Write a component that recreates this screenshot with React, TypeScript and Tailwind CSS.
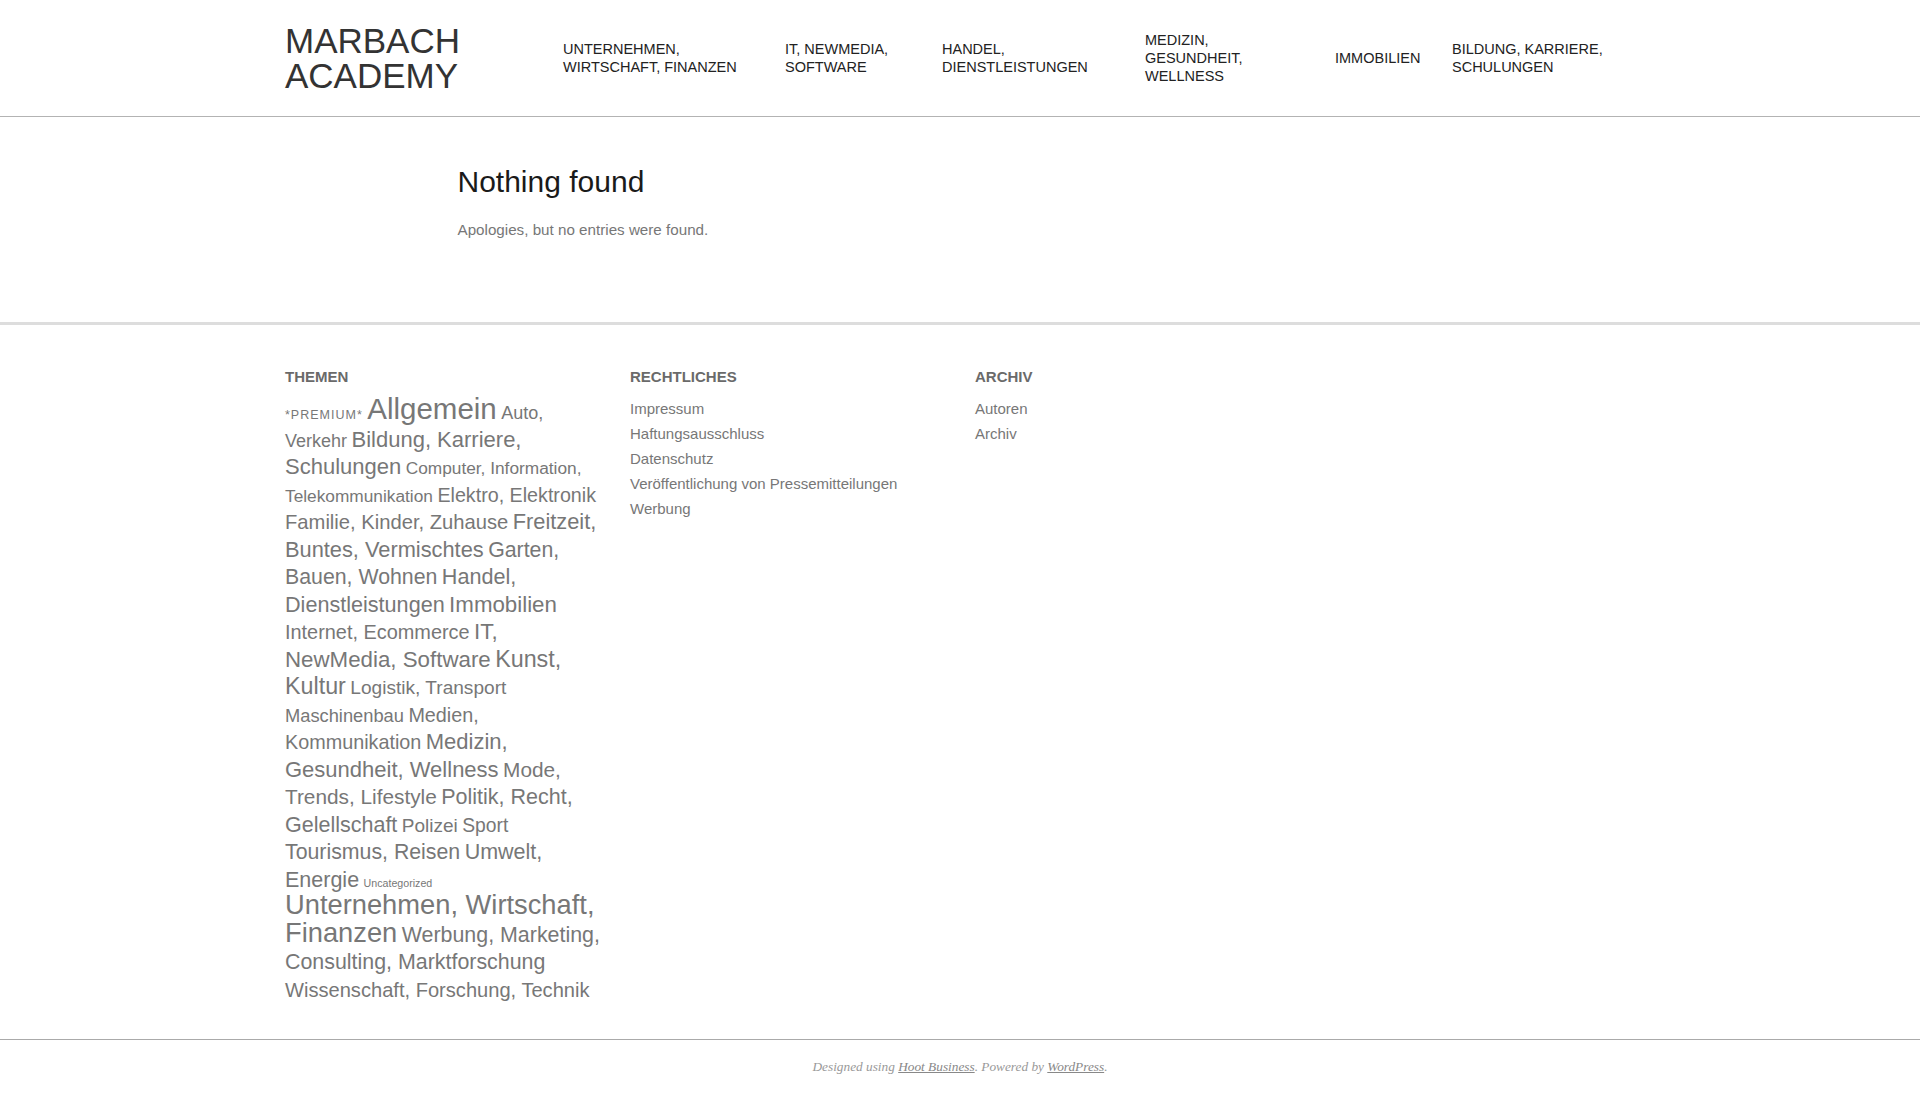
import React from "react";

type Tag = { t: string; c: string };

const navItems = [
  { lines: ["UNTERNEHMEN,", "WIRTSCHAFT, FINANZEN"], w: "w-[222px]" },
  { lines: ["IT, NEWMEDIA,", "SOFTWARE"], w: "w-[157px]" },
  { lines: ["HANDEL,", "DIENSTLEISTUNGEN"], w: "w-[203px]" },
  { lines: ["MEDIZIN,", "GESUNDHEIT,", "WELLNESS"], w: "w-[190px]" },
  { lines: ["IMMOBILIEN"], w: "w-[117px]" },
  { lines: ["BILDUNG, KARRIERE,", "SCHULUNGEN"], w: "w-[198px]" },
];

const tagLines: Tag[][] = [
  [
    { t: "*PREMIUM*", c: "text-[12.5px] tracking-[1px]" },
    { t: "Allgemein", c: "text-[29.5px]" },
    { t: "Auto,", c: "text-[18px]" },
  ],
  [
    { t: "Verkehr", c: "text-[18px]" },
    { t: "Bildung, Karriere,", c: "text-[22px]" },
  ],
  [
    { t: "Schulungen", c: "text-[22px]" },
    { t: "Computer, Information,", c: "text-[17.3px]" },
  ],
  [
    { t: "Telekommunikation", c: "text-[17.3px]" },
    { t: "Elektro, Elektronik", c: "text-[19.7px]" },
  ],
  [
    { t: "Familie, Kinder, Zuhause", c: "text-[20.2px]" },
    { t: "Freitzeit,", c: "text-[21.8px]" },
  ],
  [
    { t: "Buntes, Vermischtes", c: "text-[21.8px]" },
    { t: "Garten,", c: "text-[21.3px]" },
  ],
  [
    { t: "Bauen, Wohnen", c: "text-[21.3px]" },
    { t: "Handel,", c: "text-[21.6px]" },
  ],
  [
    { t: "Dienstleistungen", c: "text-[21.6px]" },
    { t: "Immobilien", c: "text-[22.3px]" },
  ],
  [
    { t: "Internet, Ecommerce", c: "text-[19.9px]" },
    { t: "IT,", c: "text-[22.3px]" },
  ],
  [
    { t: "NewMedia, Software", c: "text-[22.3px]" },
    { t: "Kunst,", c: "text-[23.3px]" },
  ],
  [
    { t: "Kultur", c: "text-[23.3px]" },
    { t: "Logistik, Transport", c: "text-[19.1px]" },
  ],
  [
    { t: "Maschinenbau", c: "text-[18.3px]" },
    { t: "Medien,", c: "text-[19.8px]" },
  ],
  [
    { t: "Kommunikation", c: "text-[19.8px]" },
    { t: "Medizin,", c: "text-[22px]" },
  ],
  [
    { t: "Gesundheit, Wellness", c: "text-[22px]" },
    { t: "Mode,", c: "text-[20.8px]" },
  ],
  [
    { t: "Trends, Lifestyle", c: "text-[20.8px]" },
    { t: "Politik, Recht,", c: "text-[21.5px]" },
  ],
  [
    { t: "Gelellschaft", c: "text-[21.5px]" },
    { t: "Polizei", c: "text-[19px]" },
    { t: "Sport", c: "text-[19.3px]" },
  ],
  [
    { t: "Tourismus, Reisen", c: "text-[21.3px]" },
    { t: "Umwelt,", c: "text-[21.5px]" },
  ],
  [
    { t: "Energie", c: "text-[21.5px]" },
    { t: "Uncategorized", c: "text-[10.67px]" },
  ],
  [{ t: "Unternehmen, Wirtschaft,", c: "text-[27.3px]" }],
  [
    { t: "Finanzen", c: "text-[27.3px]" },
    { t: "Werbung, Marketing,", c: "text-[21.4px]" },
  ],
  [{ t: "Consulting, Marktforschung", c: "text-[21.4px]" }],
  [{ t: "Wissenschaft, Forschung, Technik", c: "text-[20.1px]" }],
];

const rechtliches = [
  "Impressum",
  "Haftungsausschluss",
  "Datenschutz",
  "Veröffentlichung von Pressemitteilungen",
  "Werbung",
];

const archiv = ["Autoren", "Archiv"];

function WidgetTitle({ children }: { children: React.ReactNode }) {
  return (
    <h3 className="text-[15px] font-bold leading-[20px] text-[#6a6a6a]">
      {children}
    </h3>
  );
}

function LinkList({ items }: { items: string[] }) {
  return (
    <ul className="mt-[9px]">
      {items.map((it) => (
        <li key={it} className="text-[15px] leading-[25px] text-[#777777]">
          <a href="#" className="hover:text-[#333]">
            {it}
          </a>
        </li>
      ))}
    </ul>
  );
}

export default function App() {
  return (
    <div className="min-h-[1096px] bg-white font-['Liberation_Sans',Arial,sans-serif]">
      <header className="border-b border-[#b3b3b3]">
        <div className="mx-auto flex w-[1380px] items-center px-[15px] py-[23px]">
          <a
            href="#"
            className="block w-[263px] text-[35px] leading-[35px] text-[#333333]"
          >
            MARBACH
            <br />
            ACADEMY
          </a>
          <nav className="flex items-center">
            {navItems.map((n) => (
              <a
                key={n.lines.join(" ")}
                href="#"
                className={`${n.w} px-[15px] text-[14.5px] leading-[18px] text-[#222222]`}
              >
                {n.lines.map((l) => (
                  <div key={l} className="whitespace-nowrap">
                    {l}
                  </div>
                ))}
              </a>
            ))}
          </nav>
        </div>
      </header>

      <main className="mx-auto w-[1380px] pb-[80px] pt-[47px]">
        <div className="ml-[172.5px] px-[15px]">
          <h1 className="text-[30px] font-normal leading-[36px] text-[#1a1a1a]">
            Nothing found
          </h1>
          <p className="mt-[18px] text-[15.2px] leading-[24px] text-[#777777]">
            Apologies, but no entries were found.
          </p>
        </div>
      </main>

      <footer className="border-t-[3px] border-[#dddddd]">
        <div className="mx-auto grid w-[1380px] grid-cols-4 pb-[34px] pt-[42px]">
          <div className="px-[15px]">
            <WidgetTitle>THEMEN</WidgetTitle>
            <div className="mt-[13px] text-[16px] leading-[27.5px] text-[#777777]">
              {tagLines.map((line, i) => (
                <div key={i} className="whitespace-nowrap">
                  {line.map((tag, j) => (
                    <React.Fragment key={tag.t}>
                      {j > 0 ? " " : null}
                      <a href="#" className={`${tag.c} leading-[0]`}>
                        {tag.t}
                      </a>
                    </React.Fragment>
                  ))}
                </div>
              ))}
            </div>
          </div>
          <div className="px-[15px]">
            <WidgetTitle>RECHTLICHES</WidgetTitle>
            <LinkList items={rechtliches} />
          </div>
          <div className="px-[15px]">
            <WidgetTitle>ARCHIV</WidgetTitle>
            <LinkList items={archiv} />
          </div>
          <div className="px-[15px]" />
        </div>
        <div className="border-t border-[#aaaaaa] pb-[19px] pt-[17px] text-center font-['Liberation_Serif',serif] text-[13.3px] italic leading-[20px] text-[#999999]">
          Designed using{" "}
          <a href="#" className="text-[#888888] underline">
            Hoot Business
          </a>
          . Powered by{" "}
          <a href="#" className="text-[#888888] underline">
            WordPress
          </a>
          .
        </div>
      </footer>
    </div>
  );
}
